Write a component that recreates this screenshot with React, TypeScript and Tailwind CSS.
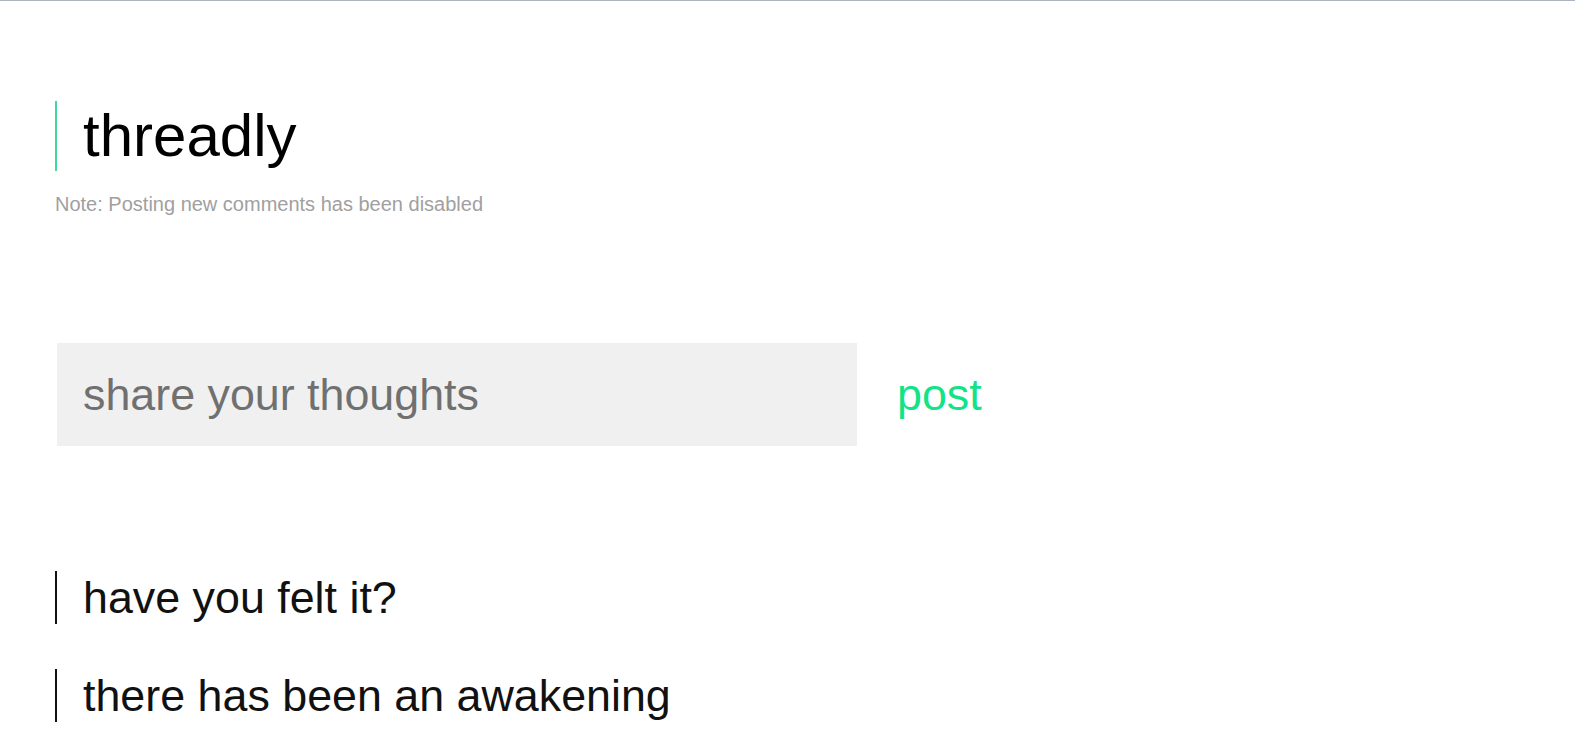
import React from 'react';

const comments = ['have you felt it?', 'there has been an awakening'];

const App: React.FC = () => {
  return (
    <div className="min-h-screen bg-white border-t border-[#aab5c0] font-['Liberation_Sans',Arial,sans-serif]">
      <div className="pl-[55px] pt-[100px]">
        <h1 className="border-l-2 border-[#3fd99d] pl-[26px] text-[60px] leading-[70px] text-black">threadly</h1>
        <p className="mt-[22px] text-[20px] leading-[23px] text-[#a0a0a0]">Note: Posting new comments has been disabled</p>

        <div className="mt-[127px] flex items-center gap-[40px]">
          <input
            type="text"
            disabled
            placeholder="share your thoughts"
            className="ml-[2px] w-[800px] h-[103px] bg-[#f0f0f0] px-[26px] text-[44.8px] text-[#707070] placeholder:text-[#707070] outline-none"
          />
          <button className="text-[44.8px] leading-none text-[#12e387]">post</button>
        </div>

        <div className="mt-[125px] space-y-[45px]">
          {comments.map((c) => (
            <div key={c} className="border-l-2 border-[#111] pl-[26px] text-[44.8px] leading-[53px] text-[#111]">
              {c}
            </div>
          ))}
        </div>
      </div>
    </div>
  );
};

export default App;
